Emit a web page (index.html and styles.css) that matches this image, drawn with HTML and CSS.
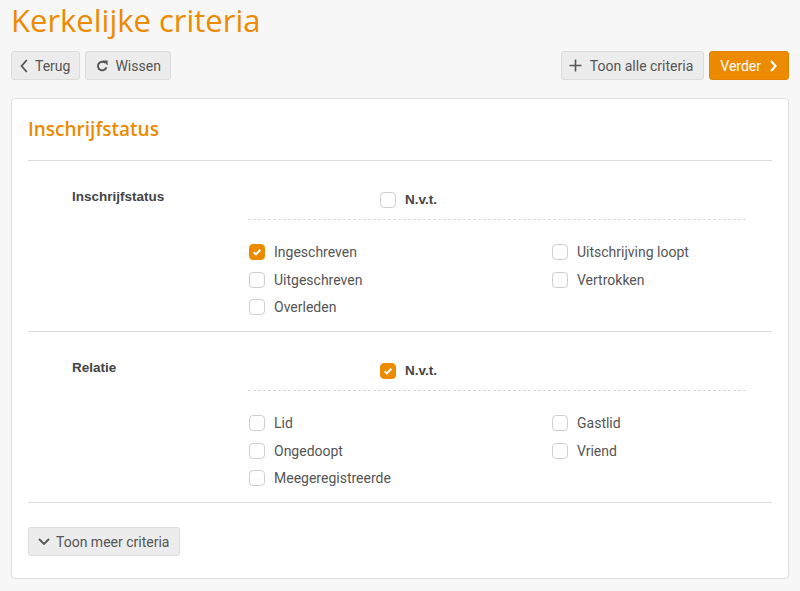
FILE: index.html
```html
<!DOCTYPE html>
<html lang="nl">
<head>
<meta charset="utf-8">
<title>Kerkelijke criteria</title>
<link rel="stylesheet" href="styles.css">
</head>
<body>
<h1 class="page-title">Kerkelijke criteria</h1>
<div class="toolbar">
  <div class="toolbar-group">
    <button class="btn btn-back"><svg class="ico" viewBox="0 0 8 14"><path d="M6.8 1 L1.6 7 L6.8 13" fill="none" stroke="currentColor" stroke-width="1.8"/></svg>Terug</button>
    <button class="btn btn-wissen"><svg class="ico" viewBox="0 0 12 12"><path d="M10.4 7.2 A4.3 4.3 0 1 1 9.2 2.9" fill="none" stroke="currentColor" stroke-width="1.9"/><path d="M6.8 0.6 L11.6 0.6 L11.6 5.4 Z" fill="currentColor"/></svg>Wissen</button>
  </div>
  <div class="toolbar-group">
    <button class="btn btn-all"><svg class="ico" viewBox="0 0 13 13"><path d="M6.5 0.5 V12.5 M0.5 6.5 H12.5" fill="none" stroke="currentColor" stroke-width="1.6"/></svg>Toon alle criteria</button>
    <button class="btn btn-primary">Verder<svg class="ico" viewBox="0 0 7 12"><path d="M1 1 L5.6 6 L1 11" fill="none" stroke="currentColor" stroke-width="2.1"/></svg></button>
  </div>
</div>

<div class="card">
  <h2 class="card-title">Inschrijfstatus</h2>

  <div class="crit">
    <div class="crit-label">Inschrijfstatus</div>
    <div class="crit-body">
      <div class="nvt">
        <label class="check bold"><span class="box"></span>N.v.t.</label>
      </div>
      <div class="options">
        <label class="check"><span class="box checked"></span>Ingeschreven</label>
        <label class="check"><span class="box"></span>Uitschrijving loopt</label>
        <label class="check"><span class="box"></span>Uitgeschreven</label>
        <label class="check"><span class="box"></span>Vertrokken</label>
        <label class="check"><span class="box"></span>Overleden</label>
      </div>
    </div>
  </div>

  <div class="crit">
    <div class="crit-label">Relatie</div>
    <div class="crit-body">
      <div class="nvt">
        <label class="check bold"><span class="box checked"></span>N.v.t.</label>
      </div>
      <div class="options">
        <label class="check"><span class="box"></span>Lid</label>
        <label class="check"><span class="box"></span>Gastlid</label>
        <label class="check"><span class="box"></span>Ongedoopt</label>
        <label class="check"><span class="box"></span>Vriend</label>
        <label class="check"><span class="box"></span>Meegeregistreerde</label>
      </div>
    </div>
  </div>

  <div class="card-footer">
    <button class="btn btn-more"><svg class="ico" viewBox="0 0 12 7"><path d="M1 1 L6 6 L11 1" fill="none" stroke="currentColor" stroke-width="1.8"/></svg>Toon meer criteria</button>
  </div>
</div>
</body>
</html>
```

FILE: styles.css
```css
* { box-sizing: border-box; }

html, body {
  margin: 0;
  background: #f7f7f7;
}

body {
  padding: 0 11px;
  font-family: Roboto, "Liberation Sans", sans-serif;
  font-size: 14px;
  color: #555;
}

.page-title {
  margin: 0;
  padding: 1px 0 0 0;
  height: 51px;
  font-family: "Open Sans", Lato, sans-serif;
  font-weight: 400;
  font-size: 31px;
  line-height: 38px;
  color: #ec8a00;
}

.toolbar {
  display: flex;
  justify-content: space-between;
  align-items: center;
  height: 29px;
  margin-bottom: 18px;
}

.toolbar-group {
  display: flex;
  gap: 5px;
}

.btn {
  display: inline-flex;
  align-items: center;
  height: 29px;
  padding: 0 9px 0 8px;
  border: 1px solid #dcdcdc;
  border-radius: 3px;
  background: #ececec;
  font-family: Roboto, "Liberation Sans", sans-serif;
  font-size: 14px;
  color: #555;
  cursor: pointer;
}

.ico {
  flex: none;
  display: block;
}

.btn-back .ico {
  width: 8px;
  height: 14px;
  margin-right: 7px;
}

.btn-wissen {
  padding-left: 10px;
}

.btn-wissen .ico {
  width: 12px;
  height: 12px;
  margin-right: 7px;
}

.btn-all {
  padding: 0 10px 0 7px;
}

.btn-all .ico {
  width: 13px;
  height: 13px;
  margin-right: 8px;
}

.btn-primary {
  background: #ec8a00;
  border-color: #e28400;
  color: #fff;
  padding: 0 11px 0 10px;
}

.btn-primary .ico {
  width: 7px;
  height: 12px;
  margin-left: 9px;
}

.btn-more {
  padding: 0 10px 0 9px;
}

.btn-more .ico {
  width: 12px;
  height: 7px;
  margin-right: 6px;
}

.card {
  background: #fff;
  border: 1px solid #e0e0e0;
  border-radius: 4px;
  padding: 0 16px 22px;
  box-shadow: 0 1px 1px rgba(0,0,0,0.04);
}

.card-title {
  margin: 0;
  height: 62px;
  padding-top: 18px;
  font-family: "Open Sans", Lato, sans-serif;
  font-size: 19px;
  font-weight: 600;
  line-height: 24px;
  color: #ec8a00;
  border-bottom: 1px solid #dcdcdc;
}

.crit {
  display: grid;
  grid-template-columns: 220px 498px;
  border-bottom: 1px solid #dcdcdc;
  height: 171px;
}

.crit-label {
  padding: 27px 0 0 44px;
  font-family: "Liberation Sans", Arial, sans-serif;
  font-weight: 700;
  font-size: 13.5px;
  line-height: 18px;
  color: #444;
}

.nvt {
  padding: 30px 0 10px 131px;
  border-bottom: 1px dashed #d8d8d8;
}

.options {
  display: grid;
  grid-template-columns: 303px 1fr;
  grid-auto-rows: 27.5px;
  padding-top: 18.5px;
}

.check {
  display: flex;
  align-items: center;
  gap: 9px;
  line-height: 18px;
  color: #555;
}

.check.bold {
  font-family: "Liberation Sans", Arial, sans-serif;
  font-weight: 700;
  font-size: 13.5px;
  color: #444;
}

.box {
  width: 16px;
  height: 16px;
  border: 1.5px solid #cfcfcf;
  border-radius: 4px;
  background: #fff;
  flex: none;
  margin-left: 1px;
}

.box.checked {
  background: #ec8a00 url("data:image/svg+xml,%3Csvg xmlns='http://www.w3.org/2000/svg' viewBox='0 0 16 16'%3E%3Cpath d='M4.2 8.3 L6.8 10.8 L11.8 5.4' fill='none' stroke='white' stroke-width='2.2'/%3E%3C/svg%3E") center/100% no-repeat;
  border-color: #ec8a00;
}

.card-footer {
  padding-top: 24px;
}
```
